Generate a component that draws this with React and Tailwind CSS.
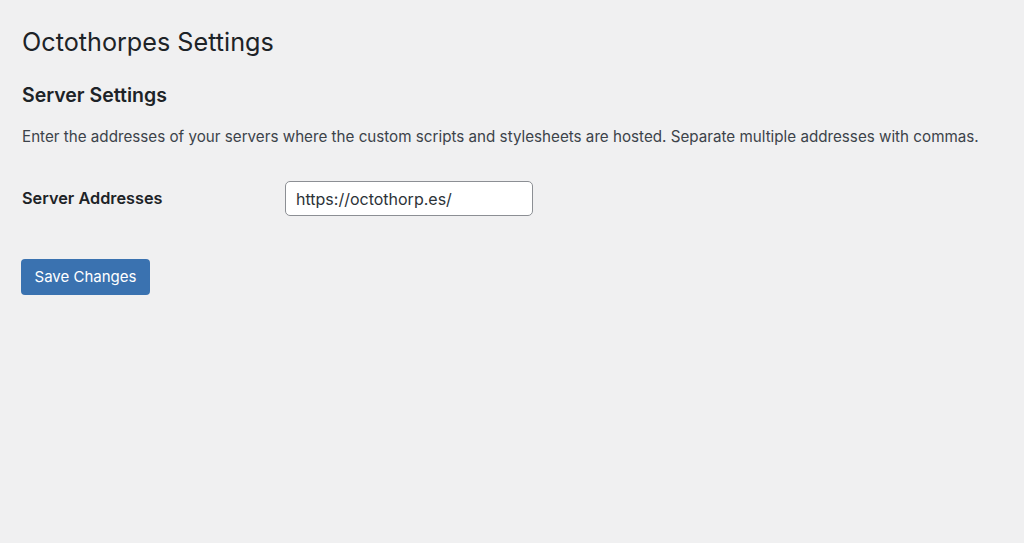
export default function App() {
  return (
    <div className="min-h-[543px] bg-[#f0f0f1] text-[#1d2327] px-[22px] pt-[24px]" style={{ fontFamily: "Inter, 'Noto Sans', sans-serif" }}>
      <h1 className="text-[25.2px] leading-[36px] font-normal">Octothorpes Settings</h1>
      <h2 className="mt-[22px] text-[19.5px] leading-[26px] font-semibold">Server Settings</h2>
      <p className="mt-[18px] text-[15.2px] leading-[22px] text-[#3c434a]">
        Enter the addresses of your servers where the custom scripts and stylesheets are hosted. Separate multiple addresses with commas.
      </p>
      <div className="mt-[33px] flex items-center">
        <label className="w-[263px] text-[16.3px] font-semibold">Server Addresses</label>
        <input
          type="text"
          defaultValue="https://octothorp.es/"
          className="w-[248px] h-[35px] rounded-[5px] border border-[#8c8f94] bg-white px-[10px] text-[16px] text-[#2c3338] outline-none"
        />
      </div>
      <button className="mt-[43px] -ml-px h-[36px] w-[129px] rounded-[4px] bg-[#3a72b0] text-white text-[15px]">
        Save Changes
      </button>
    </div>
  );
}
